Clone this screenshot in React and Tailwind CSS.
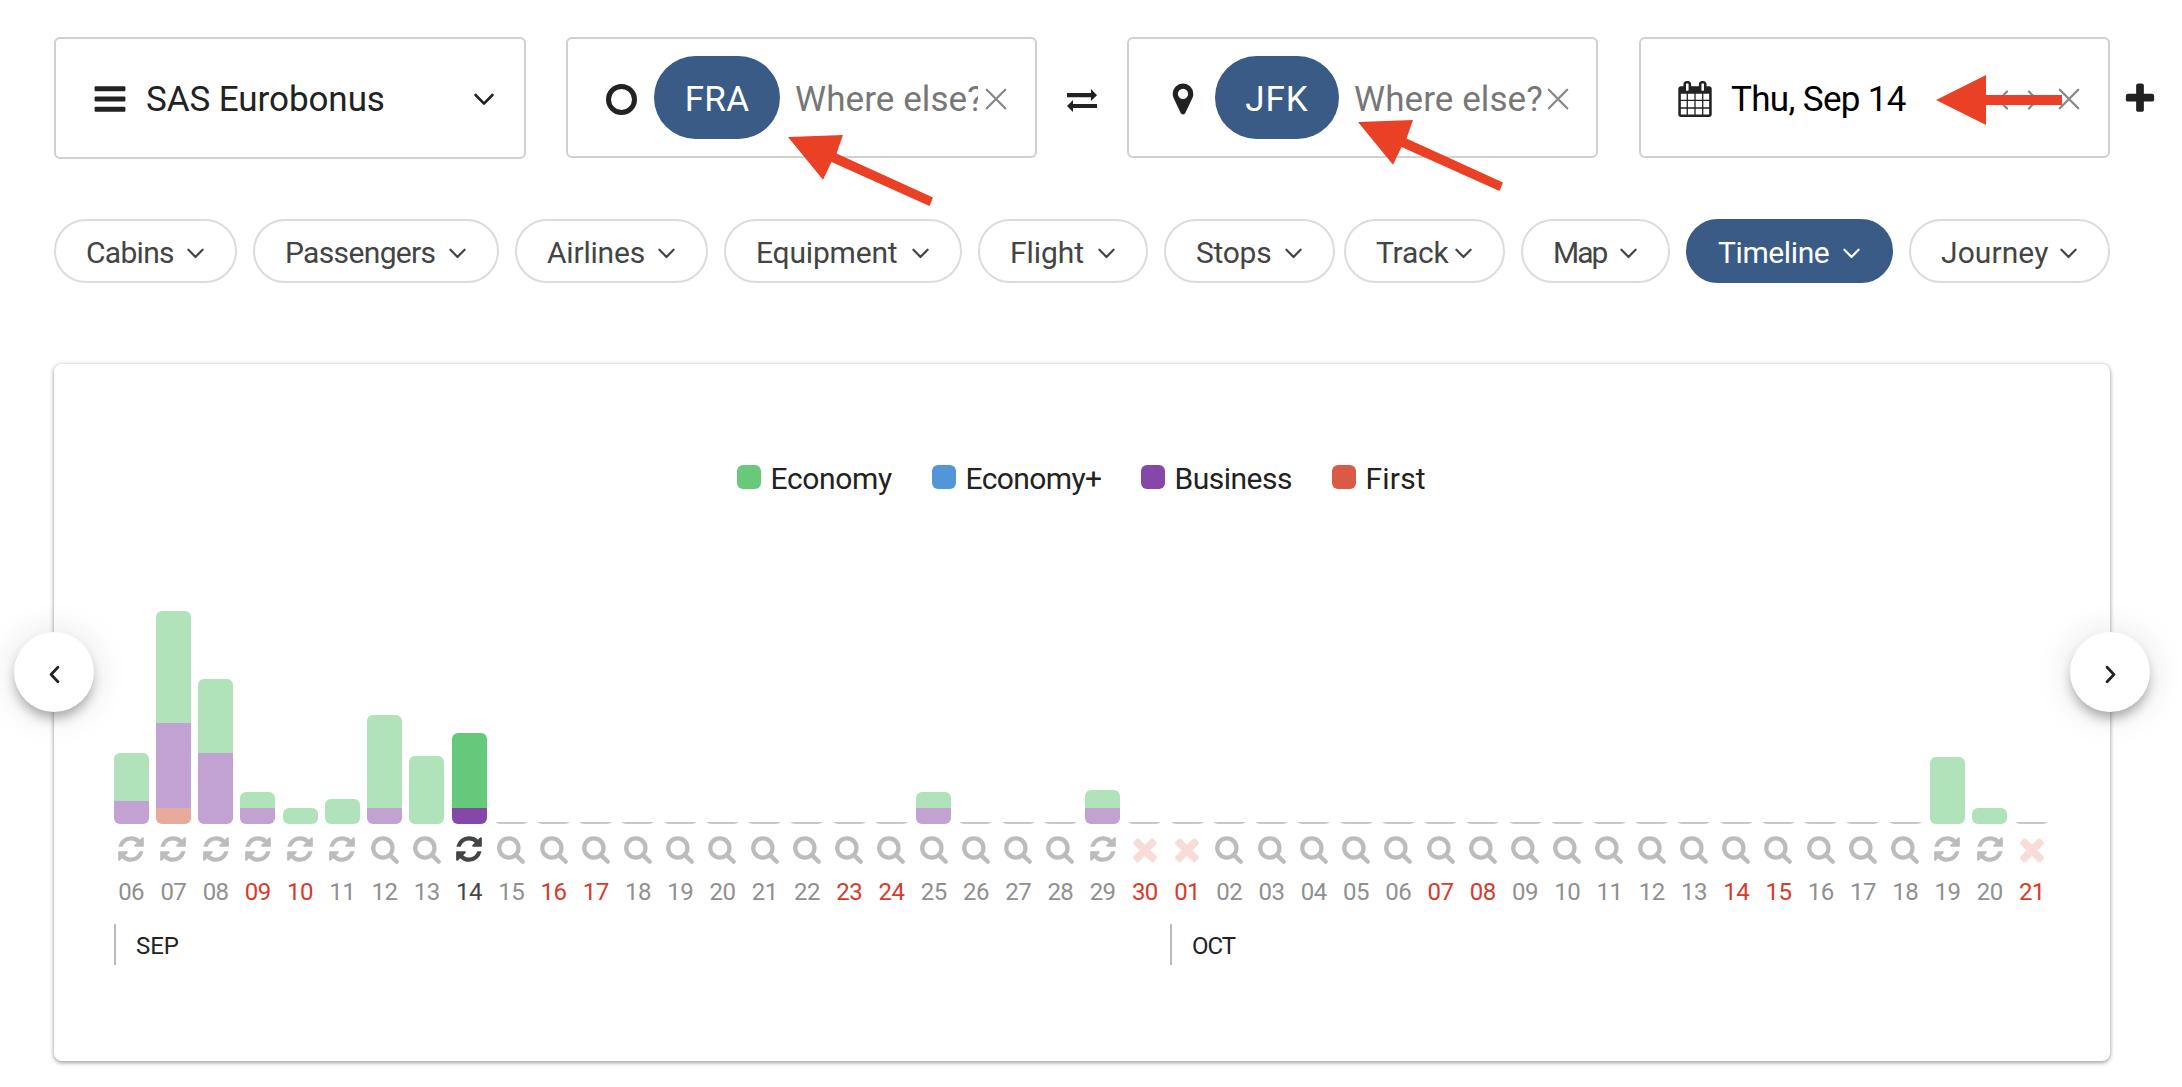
const ICONS = {
  bars: "M1664 1344v128q0 26-19 45t-45 19h-1408q-26 0-45-19t-19-45v-128q0-26 19-45t45-19h1408q26 0 45 19t19 45zm0-512v128q0 26-19 45t-45 19h-1408q-26 0-45-19t-19-45v-128q0-26 19-45t45-19h1408q26 0 45 19t19 45zm0-512v128q0 26-19 45t-45 19h-1408q-26 0-45-19t-19-45v-128q0-26 19-45t45-19h1408q26 0 45 19t19 45z",
  pin: "M1152 640q0-106-75-181t-181-75-181 75-75 181 75 181 181 75 181-75 75-181zm256 0q0 109-33 179l-364 774q-16 33-47.5 52t-67.5 19-67.5-19-46.5-52l-365-774q-33-70-33-179 0-212 150-362t362-150 362 150 150 362z",
  calendar:
    "M192 1664h288v-288h-288v288zm352 0h320v-288h-320v288zm-352-352h288v-320h-288v320zm352 0h320v-320h-320v320zm-352-384h288v-288h-288v288zm736 736h320v-288h-320v288zm-384-736h320v-288h-320v288zm768 736h288v-288h-288v288zm-384-352h320v-320h-320v320zm-352-864v-288q0-13-9.5-22.5t-22.5-9.5h-64q-13 0-22.5 9.5t-9.5 22.5v288q0 13 9.5 22.5t22.5 9.5h64q13 0 22.5-9.5t9.5-22.5zm736 864h288v-320h-288v320zm-384-384h320v-288h-320v288zm384 0h288v-288h-288v288zm32-480v-288q0-13-9.5-22.5t-22.5-9.5h-64q-13 0-22.5 9.5t-9.5 22.5v288q0 13 9.5 22.5t22.5 9.5h64q13 0 22.5-9.5t9.5-22.5zm384-64v1280q0 52-38 90t-90 38h-1408q-52 0-90-38t-38-90v-1280q0-52 38-90t90-38h128v-96q0-66 47-113t113-47h64q66 0 113 47t47 113v96h384v-96q0-66 47-113t113-47h64q66 0 113 47t47 113v96h128q52 0 90 38t38 90z",
  plus: "M1600 736v192q0 40-28 68t-68 28h-416v416q0 40-28 68t-68 28h-192q-40 0-68-28t-28-68v-416h-416q-40 0-68-28t-28-68v-192q0-40 28-68t68-28h416v-416q0-40 28-68t68-28h192q40 0 68 28t28 68v416h416q40 0 68 28t28 68z",
  search:
    "M1216 832q0-185-131.5-316.5t-316.5-131.5-316.5 131.5-131.5 316.5 131.5 316.5 316.5 131.5 316.5-131.5 131.5-316.5zm512 832q0 52-38 90t-90 38q-54 0-90-38l-343-342q-179 124-399 124-143 0-273.5-55.5t-225-150-150-225-55.5-273.5 55.5-273.5 150-225 225-150 273.5-55.5 273.5 55.5 225 150 150 225 55.5 273.5q0 220-124 399l343 343q37 37 37 90z",
  refresh:
    "M1639 1056q0 5-1 7-64 268-268 434.5t-478 166.5q-146 0-282.5-55t-243.5-157l-129 129q-19 19-45 19t-45-19-19-45v-448q0-26 19-45t45-19h448q26 0 45 19t19 45-19 45l-137 137q71 66 161 102t187 36q134 0 250-65t186-179q11-17 53-117 8-23 30-23h192q13 0 22.5 9.5t9.5 22.5zm25-800v448q0 26-19 45t-45 19h-448q-26 0-45-19t-19-45 19-45l138-138q-148-137-349-137-134 0-250 65t-186 179q-11 17-53 117-8 23-30 23h-199q-13 0-22.5-9.5t-9.5-22.5v-7q65-268 270-434.5t480-166.5q146 0 284 55.5t245 156.5l130-129q19-19 45-19t45 19 19 45z",
  times:
    "M1490 1322q0 40-28 68l-136 136q-28 28-68 28t-68-28l-294-294-294 294q-28 28-68 28t-68-28l-136-136q-28-28-28-68t28-68l294-294-294-294q-28-28-28-68t28-68l136-136q28-28 68-28t68 28l294 294 294-294q28-28 68-28t68 28l136 136q28 28 28 68t-28 68l-294 294 294 294q28 28 28 68z",
};

function Icon({ name, className }) {
  return (
    <svg viewBox="0 0 1792 1792" fill="currentColor" className={`shrink-0 ${className}`}>
      <path d={ICONS[name]} />
    </svg>
  );
}

function Down({ className }) {
  return (
    <svg viewBox="0 0 20 13" fill="none" stroke="currentColor" strokeWidth="2.6" strokeLinecap="round" strokeLinejoin="round" className={`shrink-0 ${className}`}>
      <path d="M1.6 2 10 10.6 18.4 2" />
    </svg>
  );
}

function Side({ right, className, width = 2.2 }) {
  return (
    <svg viewBox="0 0 12 20" fill="none" stroke="currentColor" strokeWidth={width} strokeLinecap="round" strokeLinejoin="round" className={`shrink-0 ${className}`}>
      <path d={right ? "M2 1.5 10 10 2 18.5" : "M10 1.5 2 10 10 18.5"} />
    </svg>
  );
}

function Clear() {
  return (
    <svg viewBox="0 0 22 22" fill="none" stroke="currentColor" strokeWidth="2.3" strokeLinecap="round" className="mt-[3px] size-[22px] shrink-0 text-[#888]">
      <path d="M1.8 1.8 20.2 20.2M20.2 1.8 1.8 20.2" />
    </svg>
  );
}

function Pointer({ className }) {
  return (
    <svg viewBox="0 0 146 71" fill="#ea4025" className={`absolute h-[71px] w-[146px] ${className}`}>
      <path d="M0 2 55 0 48.5 18.500 145 62.500 141.500 71 43.500 27 35 44.800Z" />
    </svg>
  );
}

function Place({ icon, code, pill, hint, input, className }) {
  return (
    <div className={`relative flex h-[121px] w-[471px] items-center rounded-md border-2 border-[#d0d0d0] ${className}`}>
      <div className="flex w-[60px] shrink-0 justify-end pt-[3px]">{icon}</div>
      <div className={`flex h-[83px] shrink-0 items-center justify-center rounded-full bg-[#395b85] pt-[6px] text-[35px] text-white ${pill}`}>{code}</div>
      <div className={`shrink-0 overflow-hidden whitespace-nowrap pt-[5px] text-[35px] text-[#777] ${input}`}>{hint}</div>
      <Clear />
    </div>
  );
}

const FILTERS = [
  ["Cabins", "w-[183px] tracking-[-0.69px]", "mr-4"],
  ["Passengers", "w-[246px] tracking-[-0.65px]", "mr-4"],
  ["Airlines", "w-[193px] tracking-[-0.21px]", "mr-4"],
  ["Equipment", "w-[238px] tracking-[-0.19px]", "mr-4"],
  ["Flight", "w-[170px] tracking-[-0.08px]", "mr-4"],
  ["Stops", "w-[171px] tracking-[-0.28px]", "mr-[9px]"],
  ["Track", "w-[161px] tracking-[-0.24px]", "mr-4"],
  ["Map", "w-[149px] tracking-[-2px]", "mr-4"],
  ["Timeline", "w-[207px] tracking-[-0.39px]", "mr-4"],
  ["Journey", "w-[201px] tracking-[0.08px]", ""],
];

const LEGEND = [
  ["Economy", "bg-[#68c87c]", "w-[195px] tracking-[-0.34px]"],
  ["Economy+", "bg-[#5296d7]", "w-[209px] tracking-[-0.6px]"],
  ["Business", "bg-[#8547a8]", "w-[191px] tracking-[-0.51px]"],
  ["First", "bg-[#d95b45]", "w-[100px] tracking-[0.21px]"],
];

/* index of the day -> heights of the economy, business and first segments */
const BARS = {
  0: [48, 23, 0],
  1: [112, 85, 16],
  2: [74, 71, 0],
  3: [16, 16, 0],
  4: [16, 0, 0],
  5: [25, 0, 0],
  6: [93, 16, 0],
  7: [68, 0, 0],
  8: [75, 16, 0],
  19: [16, 16, 0],
  23: [18, 16, 0],
  43: [67, 0, 0],
  44: [16, 0, 0],
};
const REFRESH = [0, 1, 2, 3, 4, 5, 8, 23, 43, 44];
const CLOSED = [24, 25, 45];
const WEEKEND = [3, 4, 10, 11, 17, 18, 24, 25, 31, 32, 38, 39, 45];
const SELECTED = 8;

const DAYS = Array.from({ length: 46 }, (_, i) => ({
  i,
  label: String(i < 25 ? i + 6 : i - 24).padStart(2, "0"),
  bar: BARS[i],
  icon: REFRESH.includes(i) ? "refresh" : CLOSED.includes(i) ? "times" : "search",
  weekend: WEEKEND.includes(i),
  selected: i === SELECTED,
}));

function Day({ day }) {
  const { bar, icon, label, weekend, selected } = day;
  return (
    <div className="flex flex-col items-center">
      <div className="flex h-[224px] items-end">
        {bar ? (
          <div className={`flex w-[35px] flex-col overflow-hidden rounded-[6px] ${selected ? "" : "opacity-50"}`}>
            <div className="bg-[#66c87a]" style={{ height: bar[0] }} />
            <div className="bg-[#8547a8]" style={{ height: bar[1] }} />
            <div className="bg-[#d5573f]" style={{ height: bar[2] }} />
          </div>
        ) : (
          <div className="flex h-3 w-[35px] items-end overflow-hidden rounded-[6px]">
            <div className="h-0.5 w-full bg-[#c8c8c8]" />
          </div>
        )}
      </div>
      <div className="mt-2.5 flex h-[30px] items-center justify-center">
        <Icon
          name={icon}
          className={
            icon === "times"
              ? "size-9 text-[#f7dcda]"
              : selected
                ? "size-[30px] text-[#444]"
                : "size-[30px] text-[#bcbcbc]"
          }
        />
      </div>
      <div
        className={`mt-[14px] h-7 text-2xl leading-7 tracking-[-0.53px] ${
          weekend ? "text-[#d93a2b]" : selected ? "text-[#444]" : "text-[#909090]"
        }`}
      >
        {label}
      </div>
    </div>
  );
}

function Nav({ right, className }) {
  return (
    <button
      className={`absolute top-[268px] flex size-20 items-center justify-center rounded-full bg-white pt-1 text-[#222] shadow-[0_8px_12px_-2px_rgba(0,0,0,0.3),0_2px_36px_rgba(0,0,0,0.13)] ${className}`}
    >
      <Side right={right} width={3.2} className="h-[17px] w-[11px]" />
    </button>
  );
}

export default function App() {
  return (
    <div className="relative h-[1087px] w-[2182px] overflow-hidden bg-white pl-[54px] pt-[37px] font-['Roboto',sans-serif] text-[#222]">
      <div className="flex items-start">
        <div className="mr-10 flex h-[122px] w-[472px] items-center rounded-md border-2 border-[#d0d0d0] pl-9 pr-[30px] pt-0.5">
          <Icon name="bars" className="size-9" />
          <span className="ml-[18px] pt-0.5 text-[35px] tracking-[-0.07px]">SAS Eurobonus</span>
          <Down className="ml-auto h-[13px] w-5" />
        </div>

        <Place
          className="mr-[90px]"
          icon={<div className="mr-[-9px] size-[31px] rounded-full border-[5px] border-[#222]" />}
          code="FRA"
          hint="Where else?"
          pill="w-[126px] tracking-[0.2px] ml-[26px]"
          input="ml-[15px] mr-[7px] w-[183px] tracking-[0.08px]"
        />
        <Place
          icon={<Icon name="pin" className="mr-[-12px] size-9" />}
          code="JFK"
          hint="Where else?"
          pill="w-[124px] tracking-[1px] ml-[26px]"
          input="ml-[15px] mr-[5px] w-[188px] tracking-[0.08px]"
        />

        <div className="ml-[41px] flex h-[121px] w-[471px] items-center rounded-md border-2 border-[#d0d0d0] pl-[36px] pr-[28px]">
          <Icon name="calendar" className="mt-[3px] size-[36px]" />
          <span className="ml-[18px] pt-[5px] text-[35px] tracking-[-0.65px] text-black">Thu, Sep 14</span>
          <div className="ml-auto flex items-center text-[#888]">
            <Side className="mr-[18px] mt-[5px] h-5 w-3" />
            <Side right className="mr-[19px] mt-[5px] h-5 w-3" />
            <Clear />
          </div>
        </div>
        <Icon name="plus" className="ml-3 mt-[44px] size-9" />
      </div>

      <div className="mt-[60px] flex h-16">
        {FILTERS.map(([label, size, margin]) => {
          const active = label === "Timeline";
          return (
            <button
              key={label}
              className={`flex h-16 shrink-0 items-center justify-between rounded-full border-2 pl-[30px] pr-[31px] text-[30px] ${size} ${margin} ${
                active ? "border-[#395b85] bg-[#395b85] text-white" : "border-[#dadddd] text-[#444]"
              }`}
            >
              <span className="pt-0.5">{label}</span>
              <Down className="mt-1 h-[11px] w-[17px]" />
            </button>
          );
        })}
      </div>

      <div className="relative mt-[81px] h-[697px] w-[2056px] rounded-lg bg-white pt-[95px] shadow-[0_2px_4px_rgba(0,0,0,0.3),0_0_5px_rgba(0,0,0,0.14)]">
        <div className="flex h-9 items-center pl-[683px]">
          {LEGEND.map(([label, color, size]) => (
            <div key={label} className={`flex shrink-0 items-center text-[30px] ${size}`}>
              <div className={`size-6 rounded-[6px] ${color}`} />
              <div className="ml-[9.500px] whitespace-nowrap pt-0.5">{label}</div>
            </div>
          ))}
        </div>

        <div className="ml-[56px] mt-[105px] grid w-[1943px] grid-cols-[repeat(46,minmax(0,1fr))]">
          {DAYS.map((day) => (
            <Day key={day.i} day={day} />
          ))}
        </div>

        <div className="ml-[60px] mt-[18px] flex h-[41px] text-2xl">
          <div className="flex w-[1056px] items-center border-l-2 border-[#bbb] pl-[20px] pt-0.5 tracking-[-0.1px]">SEP</div>
          <div className="flex items-center border-l-2 border-[#bbb] pl-[20px] pt-0.5 tracking-[-1.07px]">OCT</div>
        </div>

        <Nav className="-left-10" />
        <Nav right className="-right-10" />
      </div>

      <svg viewBox="0 0 30 23" fill="#222" className="absolute left-[1067px] top-[89px] h-[23px] w-[30px]">
        <path d="M0 4H24V0L30 6.200 24 12V8.300H0ZM30 19H6V23L0 17 6 11V15H30Z" />
      </svg>
      <Pointer className="left-[788px] top-[135px]" />
      <Pointer className="left-[1358px] top-[120px]" />
      <svg viewBox="0 0 127 50" fill="#ea4025" className="absolute left-[1936px] top-[75px] h-[50px] w-[127px]">
        <path d="M0 25 50 0V20H126V30H50V50Z" />
      </svg>
    </div>
  );
}
